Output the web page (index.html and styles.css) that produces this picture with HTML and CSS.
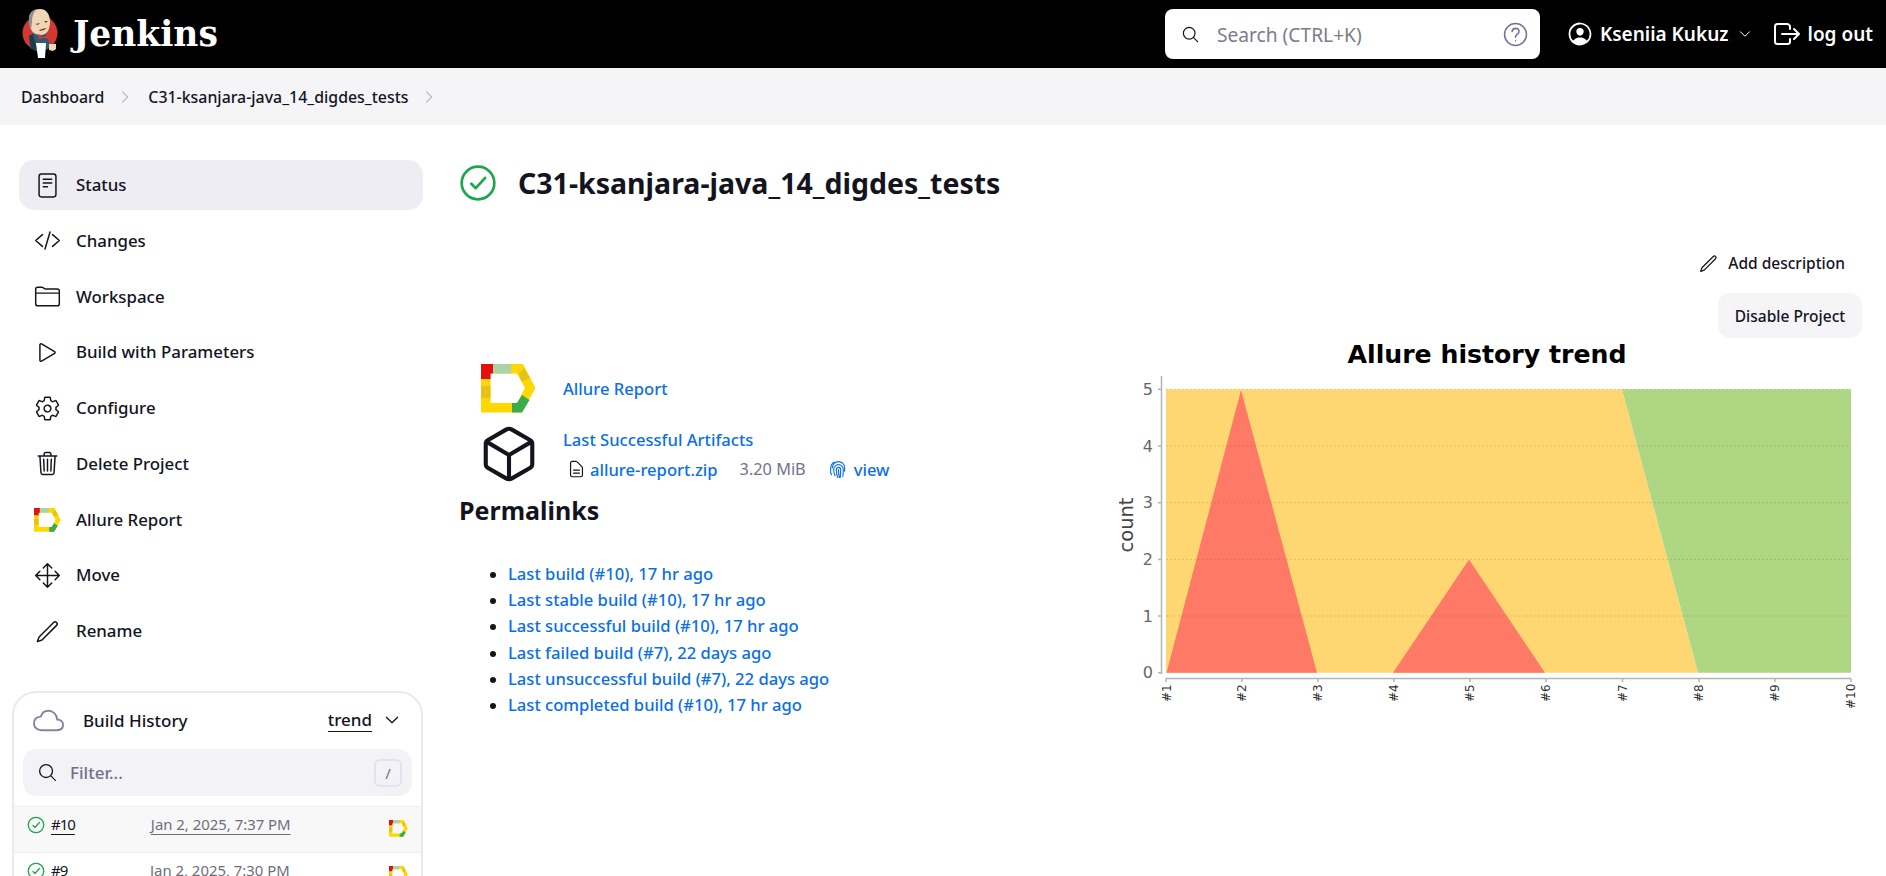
FILE: index.html
```html
<!DOCTYPE html>
<html>

<head>
  <title>C31-ksanjara-java_14_digdes_tests [Jenkins]</title>
  <link rel="stylesheet" href="styles.css">
</head>

<body>
  <svg class="defs" width="0" height="0">
    <symbol id="allure" viewBox="0 0 55 49">
      <path fill="#ffd800" d="M0 0H42L54.500 24 41 48.500H0ZM9.500 9.500V39H36L44 24 36 9.500Z" />
      <path fill="#e70e0e" d="M0 0H12V9.500H9.500V15H0Z" />
      <path fill="#a9d4a8" d="M12 0H30V9.500H12Z" />
      <path fill="#e4c414" d="M0 22H9.500V34H0ZM37.500 9.500 43 4 49 14 41 18Z" />
      <path fill="#3cab4a" d="M31 39H36L41 31 48.500 36 41 48.500H31Z" />
    </symbol>
    <symbol id="check" viewBox="0 0 512 512">
      <circle cx="256" cy="256" r="220" fill="none" stroke="#1ea64b" stroke-width="36" />
      <path fill="none" stroke="#1ea64b" stroke-width="36" stroke-linecap="round" stroke-linejoin="round" d="M352 186L226 326 166 266" />
    </symbol>
    <symbol id="pencil" viewBox="0 0 512 512">
      <path d="M372 84L96 360 64 448 152 416 428 140A39.600 39.600 0 0 0 372 84Z" />
    </symbol>
  </svg>

  <header class="topbar">
    <a class="brand">
      <svg class="brand-logo" viewBox="20 7 40 54">
        <circle cx="40" cy="33" r="17.500" fill="#d33833" />
        <path fill="#335a72" d="M29 36Q36 30 46 33L51 47 44 51H36L30 48Z" />
        <path fill="#1f3a4a" d="M29 36L33 34 37 50 31 49Z" />
        <path fill="#f0d6b7" d="M29 20C29 12 34 9 40 9 47 9 50 15 50 22 50 29 47 35 41 35 34 35 31 31 30 26 29 24 29 22 29 20Z" />
        <path fill="#8f8f8f" d="M29 20C28 14 32 10 36 10 33 13 32 17 32 22L31 30C29 27 29 23 29 20Z" />
        <path fill="#7b4a2c" d="M35 24L40 23 38 25ZM44 21L48 21 46 23ZM39 30Q44 28 47 28 44 31 40 31Z" />
        <path fill="#d33833" d="M38 34L44 37 49 33 49 39 44 38 39 39Z" />
        <path fill="#fff" d="M36 43H46L45 58H38Z" />
        <path fill="#f0d6b7" d="M49 44H56V49L53 51 49 50Z" />
      </svg>
      <span class="brand-name">Jenkins</span>
    </a>
    <div class="search">
      <svg class="ico search-ico" viewBox="0 0 512 512">
        <path d="M221.090 64a157.090 157.090 0 10157.090 157.090A157.100 157.100 0 00221.090 64z" />
        <path d="M338.290 338.290L448 448" />
      </svg>
      <span class="search-text">Search (CTRL+K)</span>
      <svg class="ico help-ico" viewBox="0 0 512 512">
        <circle cx="256" cy="256" r="224" />
        <path d="M186 196c4-42 34-66 72-66 40 0 70 24 70 62 0 56-72 58-72 118" />
        <circle class="dot" cx="256" cy="384" r="14" />
      </svg>
    </div>
    <a class="user">
      <svg class="user-ico" viewBox="0 0 512 512">
        <path d="M258.900 48C141.920 46.420 46.420 141.920 48 258.900c1.560 112.190 92.910 203.540 205.100 205.100 117 1.600 212.480-93.900 210.880-210.880C462.440 140.910 371.090 49.560 258.900 48zm126.420 327.250a4 4 0 01-6.140-.32 124.270 124.270 0 00-32.350-29.590C321.370 329 289.110 320 256 320s-65.370 9-90.830 25.340a124.240 124.240 0 00-32.350 29.580 4 4 0 01-6.140.32A175.320 175.320 0 0180 259c-1.630-97.310 78.220-178.760 175.570-179S432 158.810 432 256a175.320 175.320 0 01-46.680 119.250z" />
        <path d="M256 144c-19.720 0-37.550 7.390-50.220 20.820s-19 32-17.570 51.930C191.110 256 221.520 288 256 288s64.830-32 67.790-71.240c1.480-19.740-4.800-38.140-17.680-51.820C293.390 151.440 275.590 144 256 144z" />
      </svg>
      <span>Kseniia Kukuz</span>
      <svg class="ico user-caret" viewBox="0 0 512 512"><path d="M112 184l144 144 144-144" /></svg>
    </a>
    <a class="logout">
      <svg class="ico logout-ico" viewBox="0 0 512 512">
        <path d="M304 336v40a40 40 0 01-40 40H104a40 40 0 01-40-40V136a40 40 0 0140-40h152c22.090 0 48 17.910 48 40v40M368 336l80-80-80-80M176 256h256" />
      </svg>
      <span>log out</span>
    </a>
  </header>

  <nav class="crumbs">
    <a>Dashboard</a>
    <svg class="ico crumb-sep" viewBox="0 0 512 512"><path d="M184 112l144 144-144 144" /></svg>
    <a>C31-ksanjara-java_14_digdes_tests</a>
    <svg class="ico crumb-sep" viewBox="0 0 512 512"><path d="M184 112l144 144-144 144" /></svg>
  </nav>

  <div class="page">
    <aside class="side">
      <ul class="tasks">
        <li class="task active">
          <svg class="ico task-ico" viewBox="0 0 512 512"><rect x="96" y="40" width="320" height="432" rx="44" /><path d="M176 136h160M176 208h160M176 280h80" /></svg>
          Status
        </li>
        <li class="task">
          <svg class="ico task-ico" viewBox="0 0 512 512"><path d="M160 368L32 256l128-112M352 368l128-112-128-112M304 96l-96 320" /></svg>
          Changes
        </li>
        <li class="task">
          <svg class="ico task-ico" viewBox="0 0 512 512"><path d="M440 432H72a40 40 0 01-40-40V120a40 40 0 0140-40h75.890a40 40 0 0122.190 6.720l27.840 18.560a40 40 0 0022.190 6.720H440a40 40 0 0140 40v240a40 40 0 01-40 40zM32 192h448" /></svg>
          Workspace
        </li>
        <li class="task">
          <svg class="ico task-ico" viewBox="0 0 512 512"><path d="M112 111v290c0 17.440 17 28.520 31 20.160l247.900-148.370c12.120-7.250 12.120-26.330 0-33.580L143 90.840c-14-8.360-31 2.720-31 20.160z" /></svg>
          Build with Parameters
        </li>
        <li class="task">
          <svg class="ico task-ico" viewBox="0 0 512 512"><path d="M262.290 192.310a64 64 0 1057.400 57.400 64.130 64.130 0 00-57.400-57.400zM416.390 256a154.340 154.340 0 01-1.530 20.790l45.210 35.460a10.810 10.810 0 012.450 13.750l-42.770 74a10.810 10.810 0 01-13.140 4.590l-44.900-18.080a16.110 16.110 0 00-15.170 1.750A164.480 164.480 0 01325 400.800a15.940 15.940 0 00-8.820 12.140l-6.730 47.890a11.080 11.080 0 01-10.680 9.170h-85.540a11.110 11.110 0 01-10.690-8.870l-6.720-47.820a16.070 16.070 0 00-9-12.220 155.300 155.300 0 01-21.460-12.570 16 16 0 00-15.110-1.710l-44.890 18.070a10.810 10.810 0 01-13.140-4.580l-42.770-74a10.800 10.800 0 012.450-13.750l38.210-30a16.050 16.050 0 006-14.080c-.36-4.170-.58-8.330-.58-12.500s.21-8.270.58-12.350a16 16 0 00-6.070-13.940l-38.190-30A10.810 10.810 0 0149.480 186l42.770-74a10.810 10.810 0 0113.140-4.590l44.900 18.080a16.110 16.110 0 0015.170-1.750A164.480 164.480 0 01187 111.200a15.940 15.940 0 008.820-12.140l6.730-47.890A11.080 11.080 0 01213.230 42h85.540a11.110 11.110 0 0110.690 8.870l6.720 47.820a16.070 16.070 0 009 12.220 155.300 155.300 0 0121.460 12.570 16 16 0 0015.110 1.710l44.890-18.070a10.810 10.810 0 0113.140 4.580l42.770 74a10.800 10.800 0 01-2.450 13.750l-38.210 30a16.050 16.050 0 00-6.050 14.080c.33 4.140.55 8.300.55 12.470z" /></svg>
          Configure
        </li>
        <li class="task">
          <svg class="ico task-ico" viewBox="0 0 512 512"><path d="M112 112l20 320c.950 18.490 14.400 32 32 32h184c17.670 0 30.870-13.510 32-32l20-320M80 112h352M192 112V72a23.930 23.930 0 0124-24h80a23.930 23.930 0 0124 24v40M256 176v224M184 176l8 224M328 176l-8 224" /></svg>
          Delete Project
        </li>
        <li class="task">
          <svg class="task-logo"><use href="#allure" /></svg>
          Allure Report
        </li>
        <li class="task">
          <svg class="ico task-ico" viewBox="0 0 512 512"><path d="M176 112l80-80 80 80M256 32v448M176 400l80 80 80-80M400 176l80 80-80 80M112 176l-80 80 80 80M32 256h448" /></svg>
          Move
        </li>
        <li class="task">
          <svg class="ico task-ico"><use href="#pencil" /></svg>
          Rename
        </li>
      </ul>

      <section class="history">
        <div class="history-head">
          <svg class="ico cloud-ico" viewBox="0 0 512 512"><path d="M400 240c-8.890-89.540-71-144-144-144-69 0-113.440 48.200-128 96-60 6-112 43.590-112 112 0 66 54 112 120 112h260c55 0 100-27.440 100-88 0-59.820-53-85.760-96-88z" /></svg>
          <span class="history-title">Build History</span>
          <span class="history-trend">trend</span>
          <svg class="ico history-caret" viewBox="0 0 512 512"><path d="M112 184l144 144 144-144" /></svg>
        </div>
        <div class="filter">
          <svg class="ico filter-ico" viewBox="0 0 512 512">
            <path d="M221.090 64a157.090 157.090 0 10157.090 157.090A157.100 157.100 0 00221.090 64z" />
            <path d="M338.290 338.290L448 448" />
          </svg>
          <span class="filter-text">Filter...</span>
          <span class="filter-key">/</span>
        </div>
        <div class="build hovered">
          <svg class="build-ico"><use href="#check" /></svg>
          <a class="build-num underlined">#10</a>
          <a class="build-date underlined">Jan 2, 2025, 7:37 PM</a>
          <svg class="build-logo"><use href="#allure" /></svg>
        </div>
        <div class="build">
          <svg class="build-ico"><use href="#check" /></svg>
          <a class="build-num">#9</a>
          <a class="build-date">Jan 2, 2025, 7:30 PM</a>
          <svg class="build-logo"><use href="#allure" /></svg>
        </div>
      </section>
    </aside>

    <main class="main">
      <div class="title-row">
        <svg class="title-ico"><use href="#check" /></svg>
        <h1>C31-ksanjara-java_14_digdes_tests</h1>
      </div>

      <div class="actions">
        <a class="add-desc">
          <svg class="ico add-desc-ico"><use href="#pencil" /></svg>
          Add description
        </a>
        <button class="disable-btn">Disable Project</button>
      </div>

      <div class="columns">
        <div class="info">
          <div class="action-row report-row">
            <svg class="report-logo"><use href="#allure" /></svg>
            <a class="link">Allure Report</a>
          </div>
          <div class="action-row artifacts-row">
            <svg class="ico cube-ico" viewBox="0 0 512 512">
              <path d="M448 341.370V170.610A32 32 0 00432.110 143l-152-88.460a47.940 47.940 0 00-48.240 0L79.890 143A32 32 0 0064 170.610v170.760A32 32 0 0079.890 369l152 88.460a48 48 0 0048.240 0l152-88.460A32 32 0 00448 341.370zM69 154l187 110 187-110M256 464V264" />
            </svg>
            <div class="artifacts">
              <a class="link">Last Successful Artifacts</a>
              <div class="artifact-file">
                <svg class="ico file-ico" viewBox="0 0 512 512"><path d="M416 221v195a48 48 0 01-48 48H144a48 48 0 01-48-48V96a48 48 0 0148-48h99a32 32 0 0123 9l141 141a32 32 0 019 23zM176 288h160M176 368h160" /></svg>
                <a class="link">allure-report.zip</a>
                <span class="file-size">3.20 MiB</span>
                <svg class="ico print-ico" viewBox="0 0 24 24"><path d="M5 10a7 7 0 0 1 14 0v4M3 14v-3a9 9 0 0 1 4-7.500M8 19c-1-2-1.500-4-1.500-7a5.500 5.500 0 0 1 11 0c0 3 0 5-.5 8M11 21c-1-3-1.500-6-1.500-9a2.500 2.500 0 0 1 5 0c0 3 0 5-.5 9M12 12c0 3 .3 6 1 9M4 18c-.5-1-.8-2-1-3" /></svg>
                <a class="link">view</a>
              </div>
            </div>
          </div>
          <h2>Permalinks</h2>
          <ul class="permalinks">
            <li><a class="link">Last build (#10), 17 hr ago</a></li>
            <li><a class="link">Last stable build (#10), 17 hr ago</a></li>
            <li><a class="link">Last successful build (#10), 17 hr ago</a></li>
            <li><a class="link">Last failed build (#7), 22 days ago</a></li>
            <li><a class="link">Last unsuccessful build (#7), 22 days ago</a></li>
            <li><a class="link">Last completed build (#10), 17 hr ago</a></li>
          </ul>
        </div>

        <svg class="chart" viewBox="1110 338 752 380">
          <text class="chart-title" x="1487" y="363">Allure history trend</text>
          <path fill="#ffd772" d="M1166 389.300H1622L1698 672.700H1166Z" />
          <path fill="#afd683" d="M1622 389.300H1851V672.700H1698Z" />
          <path fill="#ff7a66" d="M1166.500 672.700L1241 390 1317 672.700ZM1393 672.700L1469 559.500 1545 672.700Z" />
          <path class="chart-grid" d="M1166 389.300H1851M1166 446H1851M1166 502.700H1851M1166 559.400H1851M1166 616H1851" />
          <path class="chart-axis" d="M1161.500 376V674M1158 389.300H1161.500M1158 446H1161.500M1158 502.700H1161.500M1158 559.400H1161.500M1158 616H1161.500M1158 672.700H1161.500" />
          <path class="chart-axis" d="M1166 678.500H1851M1166 678.500V682M1242 678.500V682M1318 678.500V682M1394 678.500V682M1470 678.500V682M1546 678.500V682M1622.500 678.500V682M1699 678.500V682M1775 678.500V682M1851 678.500V682" />
          <text class="chart-tick" x="1153" y="395">5</text>
          <text class="chart-tick" x="1153" y="452">4</text>
          <text class="chart-tick" x="1153" y="508">3</text>
          <text class="chart-tick" x="1153" y="565">2</text>
          <text class="chart-tick" x="1153" y="622">1</text>
          <text class="chart-tick" x="1153" y="678">0</text>
          <text class="chart-count" transform="translate(1133 525) rotate(-90)">count</text>
          <text class="chart-x" transform="translate(1170.500 702) rotate(-90)">#1</text>
          <text class="chart-x" transform="translate(1246 702) rotate(-90)">#2</text>
          <text class="chart-x" transform="translate(1322 702) rotate(-90)">#3</text>
          <text class="chart-x" transform="translate(1398 702) rotate(-90)">#4</text>
          <text class="chart-x" transform="translate(1474 702) rotate(-90)">#5</text>
          <text class="chart-x" transform="translate(1550 702) rotate(-90)">#6</text>
          <text class="chart-x" transform="translate(1627 702) rotate(-90)">#7</text>
          <text class="chart-x" transform="translate(1703 702) rotate(-90)">#8</text>
          <text class="chart-x" transform="translate(1779 702) rotate(-90)">#9</text>
          <text class="chart-x" transform="translate(1855 709) rotate(-90)">#10</text>
        </svg>
      </div>
    </main>
  </div>
</body>

</html>
```

FILE: styles.css
```css
html,
body {
  margin: 0;
  height: 876px;
  overflow: hidden;
}

body {
  background: #ffffff;
  color: #14141f;
  font-family: "Noto Sans", sans-serif;
  font-size: 16px;
}

ul {
  margin: 0;
  padding: 0;
  list-style: none;
}

.defs {
  position: absolute;
}

.ico {
  fill: none;
  stroke: currentColor;
  stroke-width: 32;
  stroke-linecap: round;
  stroke-linejoin: round;
  flex: none;
}

.link {
  color: #0b6fe6;
  font-size: 16.600px;
  font-weight: 500;
}

/* top bar */
.topbar {
  display: flex;
  align-items: center;
  height: 68px;
  background: #000000;
  color: #ffffff;
  padding-left: 20px;
  padding-right: 13px;
}

.brand {
  display: flex;
  align-items: center;
  gap: 13px;
}

.brand-logo {
  width: 40px;
  height: 54px;
}

.brand-name {
  font-family: "DejaVu Serif", serif;
  font-size: 34.500px;
  font-weight: 700;
}

.search {
  display: flex;
  align-items: center;
  margin-left: auto;
  width: 375px;
  height: 50px;
  box-sizing: border-box;
  padding-left: 16px;
  padding-right: 12px;
  background: #ffffff;
  border-radius: 8px;
}

.search-ico {
  width: 19px;
  height: 19px;
  color: #14141f;
}

.search-text {
  margin-left: 17px;
  color: #7c7c8a;
  font-size: 19.200px;
}

.help-ico {
  width: 25px;
  height: 25px;
  margin-left: auto;
  color: #74749a;
}

.help-ico .dot {
  fill: currentColor;
  stroke: none;
}

.user {
  display: flex;
  align-items: center;
  margin-left: 26px;
  font-size: 19px;
  font-weight: 600;
}

.user-ico {
  width: 28px;
  height: 28px;
  fill: #ffffff;
  margin-right: 6px;
}

.user-caret {
  width: 16px;
  height: 16px;
  margin-left: 8px;
}

.logout {
  display: flex;
  align-items: center;
  margin-left: 18px;
  font-size: 19px;
  font-weight: 600;
}

.logout-ico {
  width: 32px;
  height: 32px;
  margin-right: 5px;
}

/* breadcrumb */
.crumbs {
  display: flex;
  align-items: center;
  height: 57px;
  padding-left: 21px;
  background: #f5f5f8;
  font-size: 15.900px;
  font-weight: 500;
}

.crumb-sep {
  width: 18px;
  height: 18px;
  margin-left: 12px;
  margin-right: 14px;
  color: #b4b4c8;
}

/* sidebar */
.page {
  display: flex;
  padding-top: 35px;
}

.side {
  flex: none;
  width: 411px;
  margin-left: 12px;
}

.tasks {
  display: flex;
  flex-direction: column;
  gap: 5.750px;
  margin-left: 7px;
  width: 404px;
}

.task {
  display: flex;
  align-items: center;
  gap: 15px;
  height: 50px;
  padding-left: 15px;
  border-radius: 15px;
  font-size: 16.850px;
  font-weight: 500;
  line-height: 48px;
}

.task.active {
  background: #ededf3;
}

.task-ico {
  width: 27px;
  height: 27px;
  stroke-width: 28;
}

.task-logo {
  width: 27px;
  height: 24px;
}

.history {
  margin-top: 35px;
  border: 2px solid #e9e9f1;
  border-radius: 24px;
  height: 260px;
  overflow: hidden;
}

.history-head {
  display: flex;
  align-items: center;
  height: 54px;
  padding-left: 19px;
  padding-right: 19px;
  font-size: 17px;
  font-weight: 500;
}

.cloud-ico {
  width: 31px;
  height: 31px;
  color: #8585a3;
}

.history-title {
  margin-left: 19px;
}

.history-trend {
  margin-left: auto;
  border-bottom: 1.500px solid #14141f;
  line-height: 22px;
}

.history-caret {
  width: 20px;
  height: 20px;
  margin-left: 10px;
}

.filter {
  display: flex;
  align-items: center;
  height: 47px;
  margin-top: 2px;
  margin-left: 9px;
  margin-right: 9px;
  padding-left: 14px;
  padding-right: 10px;
  background: #f2f2f7;
  border-radius: 14px;
}

.filter-ico {
  width: 21px;
  height: 21px;
}

.filter-text {
  margin-left: 12px;
  color: #71718d;
  font-size: 17px;
  font-weight: 500;
}

.filter-key {
  display: flex;
  align-items: center;
  justify-content: center;
  margin-left: auto;
  width: 24px;
  height: 24px;
  border: 2px solid #e3e3ec;
  border-radius: 6px;
  color: #71718d;
  font-size: 15px;
}

.build {
  display: flex;
  align-items: flex-start;
  height: 46px;
  box-sizing: border-box;
  padding-top: 7px;
  padding-left: 13px;
  padding-right: 13px;
  border-top: 1px solid #eeeef2;
  font-size: 15px;
}

.build.hovered {
  margin-top: 10px;
  background: #f8f8f9;
}

.build-ico {
  width: 18px;
  height: 18px;
  margin-top: 2px;
}

.build-num {
  flex: none;
  margin-left: 6px;
  width: 99px;
  line-height: 20px;
  letter-spacing: -1px;
}

.build-date {
  color: #6e6e78;
  font-size: 14.900px;
  line-height: 20px;
}

a.underlined {
  text-decoration: underline;
  text-underline-offset: 4px;
}

.build-num.underlined {
  width: auto;
  margin-right: 76px;
}

.build-logo {
  width: 19px;
  height: 17px;
  margin-left: auto;
  margin-top: 6px;
}

/* main column */
.main {
  flex: 1;
  margin-left: 36px;
  margin-right: 24px;
}

.title-row {
  display: flex;
  align-items: center;
  gap: 21px;
  height: 46px;
}

.title-ico {
  width: 38px;
  height: 38px;
}

h1 {
  margin: 0;
  font-size: 28.500px;
  font-weight: 700;
}

.actions {
  display: flex;
  flex-direction: column;
  align-items: flex-end;
  gap: 15px;
  margin-top: 42px;
}

.add-desc {
  display: flex;
  align-items: center;
  gap: 9px;
  height: 30px;
  margin-right: 17px;
  font-size: 15.500px;
  font-weight: 500;
}

.add-desc-ico {
  width: 21px;
  height: 21px;
  stroke-width: 30;
}

.disable-btn {
  height: 45px;
  width: 144px;
  border: 0;
  border-radius: 12px;
  background: #f5f5f8;
  color: #14141f;
  font-family: "Noto Sans", sans-serif;
  font-size: 15.500px;
  font-weight: 500;
}

.columns {
  display: flex;
}

.info {
  flex: none;
  width: 651px;
  padding-top: 26px;
}

.action-row {
  display: flex;
  align-items: center;
}

.report-row {
  height: 49px;
  padding-left: 22px;
  gap: 27px;
}

.report-logo {
  width: 55px;
  height: 49px;
}

.artifacts-row {
  height: 54px;
  margin-top: 14px;
  padding-left: 19px;
  gap: 23px;
}

.cube-ico {
  width: 62px;
  height: 62px;
  margin-top: -4px;
  margin-bottom: -4px;
  stroke-width: 34;
}

.artifacts {
  display: flex;
  flex-direction: column;
  gap: 7px;
}

.artifact-file {
  display: flex;
  align-items: center;
  padding-left: 4px;
}

.file-ico {
  width: 19px;
  height: 20px;
  margin-right: 4px;
}

.file-size {
  margin-left: 22px;
  color: #73738a;
  font-size: 16.300px;
}

.print-ico {
  width: 21px;
  height: 21px;
  margin-left: 22px;
  margin-right: 5px;
  stroke-width: 1.300;
  color: #0b6fe6;
}

h2 {
  margin: 13px 0 35px;
  font-size: 25px;
  font-weight: 700;
  line-height: 32px;
}

.permalinks {
  list-style: disc;
  padding-left: 49px;
  line-height: 26.200px;
}

.chart {
  flex: none;
  width: 752px;
  height: 380px;
}

.chart-title {
  font-family: "DejaVu Sans", sans-serif;
  font-size: 25.200px;
  font-weight: 700;
  text-anchor: middle;
}

.chart-grid {
  fill: none;
  stroke: rgba(90, 70, 30, 0.18);
  stroke-dasharray: 2 2;
}

.chart-axis {
  fill: none;
  stroke: #b4b4b4;
  stroke-width: 1.500;
}

.chart-tick {
  font-family: "DejaVu Sans", sans-serif;
  font-size: 16px;
  fill: #666666;
  text-anchor: end;
}

.chart-count {
  font-family: "DejaVu Sans", sans-serif;
  font-size: 19.500px;
  fill: #444444;
  text-anchor: middle;
}

.chart-x {
  font-family: "DejaVu Sans", sans-serif;
  font-size: 12px;
  fill: #333333;
}
```
